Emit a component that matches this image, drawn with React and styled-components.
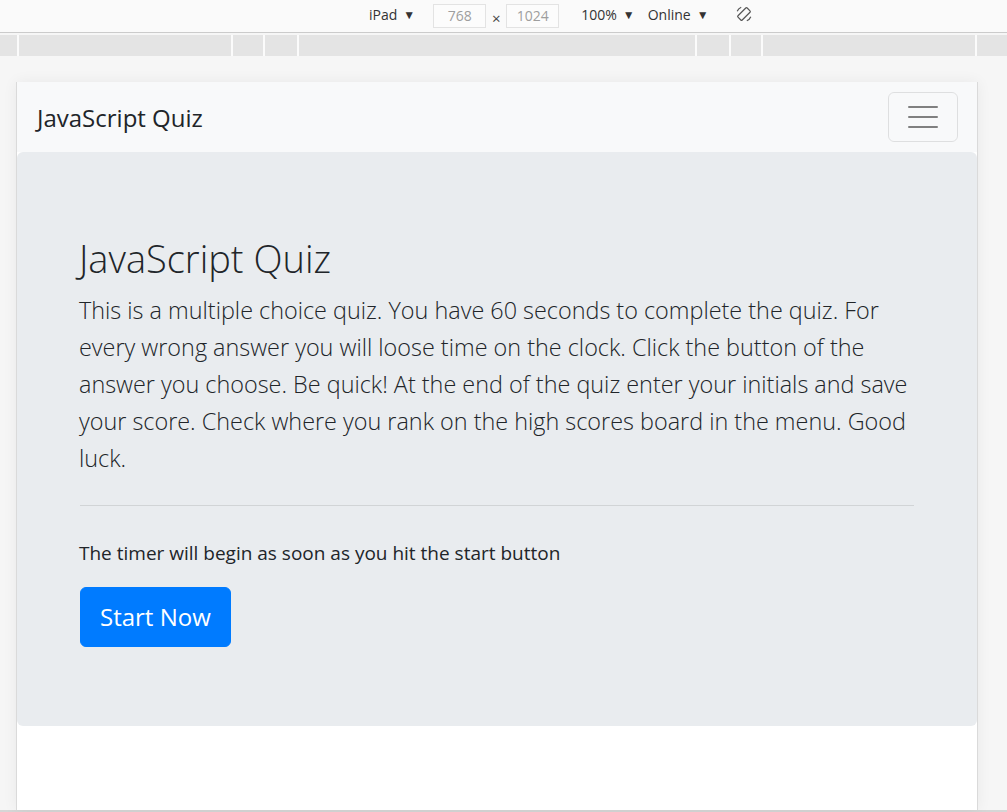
import React from "react";
import styled, { createGlobalStyle } from "styled-components";

const GlobalStyle = createGlobalStyle`
  html, body {
    margin: 0;
    padding: 0;
  }
  body {
    background: #f6f6f6;
    font-family: "Open Sans", "Noto Sans", sans-serif;
    color: #212529;
    overflow: hidden;
  }
`;

const rulerSegments = [17, 212, 30, 32, 396, 32, 30, 212];

const RotateIcon = () => (
  <svg width="20" height="20" viewBox="0 0 20 20" fill="none" stroke="#555" strokeWidth="1.2">
    <rect x="7" y="3.5" width="6" height="13" rx="1" transform="rotate(45 10 10)" />
    <path d="M3.2 7.2 A7.3 7.3 0 0 1 7.2 3.2" />
    <path d="M16.8 12.8 A7.3 7.3 0 0 1 12.8 16.8" />
  </svg>
);

const App = () => {
  return (
    <Wrapper>
      <GlobalStyle />
      <DevToolbar>
        <ToolItem>iPad<Caret>▼</Caret></ToolItem>
        <SizeBox>768</SizeBox>
        <Times>×</Times>
        <SizeBox>1024</SizeBox>
        <ToolItem $ml={22}>100%<Caret>▼</Caret></ToolItem>
        <ToolItem $ml={13}>Online<Caret>▼</Caret></ToolItem>
        <IconSlot><RotateIcon /></IconSlot>
      </DevToolbar>
      <Ruler>
        {rulerSegments.map((w, i) => (
          <RulerSegment key={i} style={{ width: w }} />
        ))}
        <RulerSegment $grow />
      </Ruler>
      <Stage>
        <Page>
          <Navbar>
            <Brand>JavaScript Quiz</Brand>
            <Toggler>
              <TogglerBar />
              <TogglerBar />
              <TogglerBar />
            </Toggler>
          </Navbar>
          <Jumbotron>
            <Title>JavaScript Quiz</Title>
            <Lead>
              This is a multiple choice quiz. You have 60 seconds to complete the quiz. For
              every wrong answer you will loose time on the clock. Click the button of the
              answer you choose. Be quick! At the end of the quiz enter your initials and save
              your score. Check where you rank on the high scores board in the menu. Good
              luck.
            </Lead>
            <Divider />
            <Note>The timer will begin as soon as you hit the start button</Note>
            <StartButton>Start Now</StartButton>
          </Jumbotron>
        </Page>
      </Stage>
    </Wrapper>
  );
};

export default App;

const Wrapper = styled.div`
  width: 1007px;
  height: 812px;
  display: flex;
  flex-direction: column;
  overflow: hidden;
`;

const DevToolbar = styled.div`
  height: 33px;
  flex-shrink: 0;
  box-sizing: border-box;
  background: #fafafa;
  border-bottom: 1px solid #cbcbcb;
  display: flex;
  align-items: center;
  padding: 0 0 3px 369px;
  font-size: 14px;
  color: #333;
`;

const ToolItem = styled.div`
  display: flex;
  align-items: center;
  margin-left: ${(p) => (p.$ml ? p.$ml + "px" : "0")};
  margin-right: ${(p) => (p.$ml ? "0" : "18px")};
`;

const Caret = styled.span`
  font-size: 12px;
  margin-left: 6px;
  color: #333;
`;

const SizeBox = styled.div`
  width: 53px;
  height: 24px;
  box-sizing: border-box;
  border: 1px solid #e3e3e3;
  background: #fcfcfc;
  color: #9e9e9e;
  display: flex;
  align-items: center;
  justify-content: center;
  font-size: 14px;
  margin-top: 2px;
`;

const Times = styled.span`
  width: 20px;
  text-align: center;
  font-size: 15px;
  margin-top: 7px;
  color: #444;
`;

const IconSlot = styled.div`
  margin-left: 25px;
  display: flex;
  align-items: center;
  margin-top: -1px;
`;

const Ruler = styled.div`
  margin-top: 2px;
  height: 21px;
  flex-shrink: 0;
  display: flex;
  gap: 2px;
  background: #fbfbfb;
`;

const RulerSegment = styled.div`
  background: #e4e4e4;
  flex: ${(p) => (p.$grow ? "1" : "none")};
`;

const Stage = styled.div`
  flex: 1;
  padding: 26px 0 0 16px;
  background: #f6f6f6;
  border-bottom: 2px solid #d6d6d6;
  display: flex;
  min-height: 0;
`;

const Page = styled.div`
  width: 960px;
  background: #fff;
  border-left: 1px solid #dadada;
  border-right: 1px solid #dadada;
  box-shadow: 0 0 14px rgba(0, 0, 0, 0.06);
  display: flex;
  flex-direction: column;
`;

const Navbar = styled.nav`
  height: 70px;
  background: #f8f9fa;
  display: flex;
  align-items: center;
  justify-content: space-between;
  padding: 0 19px 0 20px;
`;

const Brand = styled.div`
  font-size: 24px;
  color: #212529;
`;

const Toggler = styled.button`
  width: 70px;
  height: 50px;
  box-sizing: border-box;
  background: transparent;
  border: 1px solid rgba(0, 0, 0, 0.1);
  border-radius: 6px;
  display: flex;
  flex-direction: column;
  align-items: center;
  justify-content: center;
  gap: 8px;
  padding: 0;
`;

const TogglerBar = styled.span`
  width: 30px;
  height: 2px;
  background: #808080;
  border-radius: 1px;
`;

const Jumbotron = styled.div`
  background: #e9ecef;
  border-radius: 6px;
  padding: 82px 62px 79px;
  display: flex;
  flex-direction: column;
  align-items: flex-start;
`;

const Title = styled.h1`
  margin: 0 0 10px;
  font-size: 38px;
  line-height: 48px;
  font-weight: 300;
  color: #212529;
`;

const Lead = styled.p`
  margin: 0;
  width: 838px;
  font-size: 23.4px;
  line-height: 37px;
  font-weight: 300;
  color: #212529;
`;

const Divider = styled.hr`
  width: 834px;
  margin: 28px 0 32px 1px;
  border: 0;
  border-top: 1px solid rgba(0, 0, 0, 0.1);
`;

const Note = styled.p`
  margin: 0 0 19px;
  font-size: 19px;
  line-height: 30px;
  color: #212529;
`;

const StartButton = styled.button`
  height: 60px;
  padding: 0 19px;
  margin-left: 1px;
  background: #007bff;
  border: 1px solid #007bff;
  border-radius: 6px;
  color: #fff;
  font-family: "Open Sans", "Noto Sans", sans-serif;
  font-size: 24px;
  line-height: 1;
`;
